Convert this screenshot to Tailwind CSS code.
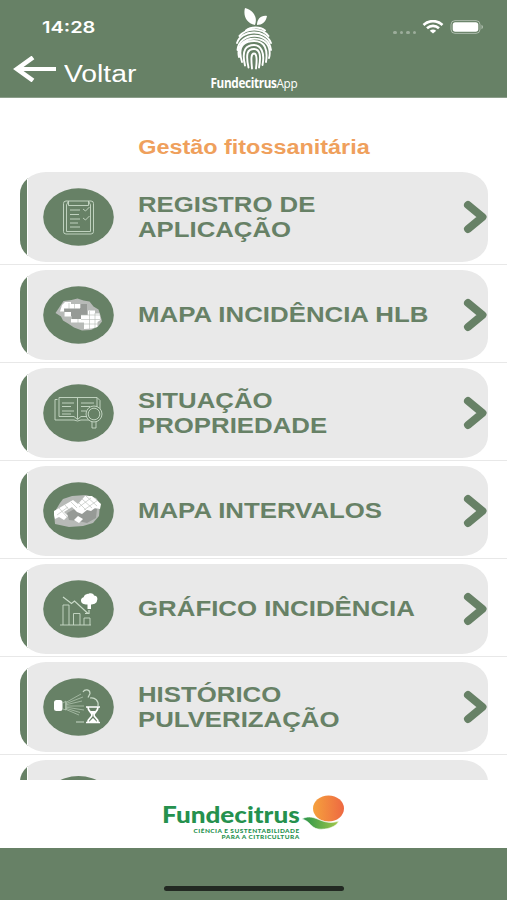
<!doctype html>
<html lang="pt-BR">

<head>
  <meta charset="utf-8">
  <meta name="viewport" content="width=device-width, initial-scale=1">
  <script src="https://cdn.jsdelivr.net/npm/@tailwindcss/browser@4"></script>
  <title>Gestão fitossanitária</title>
</head>

<body class="h-[900px] flex flex-col overflow-hidden bg-white font-['Liberation_Sans',sans-serif] text-[#678166]">
  <header class="h-[98px] shrink-0 grid grid-cols-[190px_1fr_190px] bg-[#678166] text-white border-b border-[#8b9e8a]">
    <div>
      <div class="pl-[42px] pt-[15px] h-[52px]">
        <span class="inline-block origin-left scale-x-[1.25] font-['Inter',sans-serif] font-semibold text-[16px] leading-6">14:28</span>
      </div>
      <div class="flex items-center pl-[13px]">
        <svg class="w-[43px] h-[26px] mt-[-5px]" viewBox="0 0 43 26" fill="none" stroke="#fff">
          <path d="M20 1.500 4 13l16 11.500" stroke-width="4.600" />
          <path d="M3 13h40" stroke-width="3.800" />
        </svg>
        <span class="ml-2 mt-1.5 inline-block origin-left scale-x-[1.23] text-[23px] leading-8">Voltar</span>
      </div>
    </div>

    <div class="flex flex-col items-center">
      <svg class="mt-[7px] w-[38px] h-[65px]" viewBox="0 0 38 65" fill="none" stroke="#fff" stroke-width="1.900" stroke-linecap="round">
        <path d="M20 18C11 16 8 8 10 1c8 2 13 9 10 17zM22 18c0-6 4-10 10-9-1 6-5 9-10 9z" fill="#fff" stroke="none" />
        <path d="M11 23.500c5-4 14-4 19 0M4.500 29c7-8 22-9 29 0" />
        <path d="M2 36c4-13 28-15 34 0M2.500 43c2-18 31-20 33.500 0" />
        <path d="M4 50C-1 29 30 26 34 41c1 4 1 7 0 10M7 55C1 36 13 34 19 34c11 0 14 9 12 21" />
        <path d="M10 58.500C6 42 12 38 19 38s11 8 8.500 20M13.500 60.500c-3-14-1-18.500 5.500-18.500s7 8 5 18.500" />
        <path d="M17 61.500c-1-10-1-15 2-15s3 7 2 15" />
      </svg>
      <span class="mt-[1px] inline-block origin-center scale-x-[.87] whitespace-nowrap font-['Open_Sans',sans-serif] text-[13.500px] leading-5 tracking-[-0.4px]"><b class="font-bold">Fundecitrus</b><span class="font-medium">App</span></span>
    </div>

    <div class="flex pt-5 pl-[76px]">
      <div class="flex gap-[3px] mt-[11px] mr-[7px]">
        <i class="w-[3.500px] h-[2.500px] rounded-full bg-white/35"></i>
        <i class="w-[3.500px] h-[2.500px] rounded-full bg-white/35"></i>
        <i class="w-[3.500px] h-[2.500px] rounded-full bg-white/35"></i>
        <i class="w-[3.500px] h-[2.500px] rounded-full bg-white/35"></i>
      </div>
      <svg class="-ml-px w-[22px] h-[14px]" viewBox="0 0 22 14" fill="none" stroke="#fff" stroke-width="2.600">
        <path d="M1.500 5C7-.2 15-.2 20.500 5M5 8.300c3.500-3.200 8.500-3.200 12 0" />
        <path d="M7.800 10.700c2-1.600 4.400-1.600 6.400 0L11 13.500z" fill="#fff" stroke="none" />
      </svg>
      <svg class="ml-[6px] w-[34px] h-[14px]" viewBox="0 0 34 14">
        <rect x="1" y=".6" width="29" height="12.800" rx="4" fill="none" stroke="#fff" stroke-opacity=".45" />
        <rect x="2.700" y="2.300" width="25.600" height="9.400" rx="2.600" fill="#fff" />
        <path d="M31.500 4.800c2 .8 2 3.600 0 4.400z" fill="#fff" fill-opacity=".5" />
      </svg>
    </div>
  </header>

  <main class="h-[682px] shrink-0 overflow-hidden">
    <h1 class="h-[69px] pt-[37px] text-center text-[20px] leading-6 font-bold text-[#efa05c]">
      <span class="inline-block scale-x-[1.17]">Gestão fitossanitária</span>
    </h1>

    <ul>
      <li class="h-[98px] pt-[5px] px-5 border-b border-[#e8e8e8]">
        <a class="h-[90px] w-[468px] flex items-center rounded-[26px/22px] overflow-hidden bg-[#e9e9e9]">
          <i class="w-2 h-full bg-[#678166] border-r border-white"></i>
          <svg class="ml-[15px] w-[71px] h-[58px] shrink-0" viewBox="0 0 71 58" fill="none" stroke="#c9dac8" stroke-width=".9">
            <ellipse cx="35.500" cy="29" rx="35.300" ry="28.800" fill="#678166" stroke="none" />
            <rect x="20.500" y="13" width="30" height="33" rx="2.500" />
            <path d="M23.500 17v26.500h24V17M25.500 13v4.500h20V13M23.500 17l2-4M47.500 17l-2-4" />
            <path d="M27 22h10M27 26.500h9M27 31h10M27 35h8M27 39h10M40 21l2.500 2 4-4M40 30l2.500 2 4-4" />
          </svg>
          <span class="ml-6 mt-px w-[320px] shrink-0 origin-left scale-x-[1.17] text-[22px] leading-[24.500px] font-bold">REGISTRO DE<br>APLICAÇÃO</span>
          <svg class="ml-[5px] w-6 h-[34px] shrink-0" viewBox="0 0 24 34" fill="none" stroke="#678166" stroke-width="8" stroke-linecap="round" stroke-linejoin="round"><path d="M5 5 19.500 17 5 29" /></svg>
        </a>
      </li>

      <li class="h-[98px] pt-[5px] px-5 border-b border-[#e8e8e8]">
        <a class="h-[90px] w-[468px] flex items-center rounded-[26px/22px] overflow-hidden bg-[#e9e9e9]">
          <i class="w-2 h-full bg-[#678166] border-r border-white"></i>
          <svg class="ml-[15px] w-[71px] h-[58px] shrink-0" viewBox="0 0 71 58">
            <ellipse cx="35.500" cy="29" rx="35.300" ry="28.800" fill="#678166" />
            <path d="m12.500 27 4-6 4-6 8-1 6-1.500 6 2 6 1 4 5 5 3 2 6 1.500 6-4 5-7 3.500-9 .5-8-3-6-4-5-3-2-4z" fill="#b7bab7" />
            <path d="M21 22h17v-4h6v16H29v-4h-7z" fill="#969a96" />
            <path d="M19 19l3-3h6v2h9v4.500H21v3h-4zM21.500 26h6.500v4.500h-6.500zM28 33h13.500v3.500H28zM45 24.500h7v3h4.500l1 6.500-3 2v5l-6 1.500-7.500.5V33h-3v-4h7z" fill="#fff" />
            <path d="M26 17v6M31.500 18v5M35 33v4M46.500 25v18M52 27v15M38 29h19M38 33.500h19M41 38h14" fill="none" stroke="#b4b8b4" stroke-width=".6" />
          </svg>
          <span class="ml-6 mt-px w-[320px] shrink-0 origin-left scale-x-[1.174] text-[22px] leading-[24.500px] font-bold">MAPA INCIDÊNCIA HLB</span>
          <svg class="ml-[5px] w-6 h-[34px] shrink-0" viewBox="0 0 24 34" fill="none" stroke="#678166" stroke-width="8" stroke-linecap="round" stroke-linejoin="round"><path d="M5 5 19.500 17 5 29" /></svg>
        </a>
      </li>

      <li class="h-[98px] pt-[5px] px-5 border-b border-[#e8e8e8]">
        <a class="h-[90px] w-[468px] flex items-center rounded-[26px/22px] overflow-hidden bg-[#e9e9e9]">
          <i class="w-2 h-full bg-[#678166] border-r border-white"></i>
          <svg class="ml-[15px] w-[71px] h-[58px] shrink-0" viewBox="0 0 71 58" fill="none" stroke="#c9dac8" stroke-width=".9">
            <ellipse cx="35.500" cy="29" rx="35.300" ry="28.800" fill="#678166" stroke="none" />
            <path d="M16 13.500h38l3 3V29M16 13.500v19h15l3.500 3 3.500-3h7M14.500 15.500H12V36h19l3.500 1 3.500-1h9M34.500 14v21M54 13.500V25" />
            <path d="M19 19h12M19 22.500h9M19 27h12M19 30h9M38 19h13M38 22.500h9M38 27h5" />
            <circle cx="51" cy="30" r="8" fill="#678166" />
            <circle cx="51" cy="30" r="5.800" />
            <path d="M49 38v6h4v-6" />
          </svg>
          <span class="ml-6 mt-px w-[320px] shrink-0 origin-left scale-x-[1.172] text-[22px] leading-[24.500px] font-bold">SITUAÇÃO<br>PROPRIEDADE</span>
          <svg class="ml-[5px] w-6 h-[34px] shrink-0" viewBox="0 0 24 34" fill="none" stroke="#678166" stroke-width="8" stroke-linecap="round" stroke-linejoin="round"><path d="M5 5 19.500 17 5 29" /></svg>
        </a>
      </li>

      <li class="h-[98px] pt-[5px] px-5 border-b border-[#e8e8e8]">
        <a class="h-[90px] w-[468px] flex items-center rounded-[26px/22px] overflow-hidden bg-[#e9e9e9]">
          <i class="w-2 h-full bg-[#678166] border-r border-white"></i>
          <svg class="ml-[15px] w-[71px] h-[58px] shrink-0" viewBox="0 0 71 58">
            <ellipse cx="35.500" cy="29" rx="35.300" ry="28.800" fill="#678166" />
            <path d="m11 31 6-10 3-4 9-3 14-1 10 3 4 6-1 12-6 7-10 3-14 1-14-3z" fill="#b7bab7" />
            <path d="m24 31 13-7 17 3-1 9-9 5-9-2-9-1z" fill="#969a96" />
            <path d="m11 29 19-11 5 4 7-8 7 0 9 8-1 5-5-1-4 3-4-1-5 4-5-2-5-5-8 5 4 4-4 4-5-3-4 2-1-4zM31 38l4-4 5 3-4 4z" fill="#fff" />
            <path d="m16 26 8 9M22 23l5 6M28 20l6 6M35 20l8 8M39 17l10 9M43 14l11 10M36 25l12-9M41 28l14-10M14 33l11-8" fill="none" stroke="#b4b8b4" stroke-width=".6" />
          </svg>
          <span class="ml-6 mt-px w-[320px] shrink-0 origin-left scale-x-[1.172] text-[22px] leading-[24.500px] font-bold">MAPA INTERVALOS</span>
          <svg class="ml-[5px] w-6 h-[34px] shrink-0" viewBox="0 0 24 34" fill="none" stroke="#678166" stroke-width="8" stroke-linecap="round" stroke-linejoin="round"><path d="M5 5 19.500 17 5 29" /></svg>
        </a>
      </li>

      <li class="h-[98px] pt-[5px] px-5 border-b border-[#e8e8e8]">
        <a class="h-[90px] w-[468px] flex items-center rounded-[26px/22px] overflow-hidden bg-[#e9e9e9]">
          <i class="w-2 h-full bg-[#678166] border-r border-white"></i>
          <svg class="ml-[15px] w-[71px] h-[58px] shrink-0" viewBox="0 0 71 58" fill="none" stroke="#c9dac8" stroke-width=".9">
            <ellipse cx="35.500" cy="29" rx="35.300" ry="28.800" fill="#678166" stroke="none" />
            <path d="M17 45h31M20 45V25h6v20M30.500 45V33.500h6.500V45M41 45v-7h6v7" />
            <path d="m20 17 8.500 6.500 3-2.500L45 33.500m-3 0h4V30" stroke-width="1.200" />
            <path d="M44 24.500c-3 0-6-1-6-4s3-3 3-4c1-3 4-2 5-3 3-1 5 1 5 2 3 0 4 3 3 5 0 3-4 4-6 4v4.500h-3.500v-4.500z" fill="#fff" stroke="none" />
          </svg>
          <span class="ml-6 mt-px w-[320px] shrink-0 origin-left scale-x-[1.174] text-[22px] leading-[24.500px] font-bold">GRÁFICO INCIDÊNCIA</span>
          <svg class="ml-[5px] w-6 h-[34px] shrink-0" viewBox="0 0 24 34" fill="none" stroke="#678166" stroke-width="8" stroke-linecap="round" stroke-linejoin="round"><path d="M5 5 19.500 17 5 29" /></svg>
        </a>
      </li>

      <li class="h-[98px] pt-[5px] px-5 border-b border-[#e8e8e8]">
        <a class="h-[90px] w-[468px] flex items-center rounded-[26px/22px] overflow-hidden bg-[#e9e9e9]">
          <i class="w-2 h-full bg-[#678166] border-r border-white"></i>
          <svg class="ml-[15px] w-[71px] h-[58px] shrink-0" viewBox="0 0 71 58" fill="none" stroke="#c9dac8" stroke-width=".6">
            <ellipse cx="35.500" cy="29" rx="35.300" ry="28.800" fill="#678166" stroke="none" />
            <rect x="11" y="22" width="8.500" height="11" rx="2.500" fill="#fff" stroke="none" />
            <path d="m20 25 3-2v9l-3-1M22 25l16-9M22 26l18-7M22 27l17-4M22 28h19M22 29l19 3M22 30l15 4.500M22 31l14 6" />
            <path d="M40 14c2-3.500 7-2.500 7 1.500l-2 4M47 20c5-1 9 3 8 8M33 44h8" stroke-width="1.200" />
            <path d="M43 29h14M43 44.500h14M45 29c0 5 4 5 4 8s-4 3-4 7M55 29c0 5-4 5-4 8s4 3 4 7" stroke="#fff" stroke-width="1.700" />
            <path d="M47 33h6l-3 4zM46 44l4-4 4 4z" fill="#fff" stroke="none" />
          </svg>
          <span class="ml-6 mt-px w-[320px] shrink-0 origin-left scale-x-[1.172] text-[22px] leading-[24.500px] font-bold">HISTÓRICO<br>PULVERIZAÇÃO</span>
          <svg class="ml-[5px] w-6 h-[34px] shrink-0" viewBox="0 0 24 34" fill="none" stroke="#678166" stroke-width="8" stroke-linecap="round" stroke-linejoin="round"><path d="M5 5 19.500 17 5 29" /></svg>
        </a>
      </li>

      <li class="h-[98px] pt-[5px] px-5">
        <a class="h-[90px] w-[468px] flex items-center rounded-[26px/22px] overflow-hidden bg-[#e9e9e9]">
          <i class="w-2 h-full bg-[#678166] border-r border-white"></i>
          <i class="ml-[15px] w-[71px] h-[58px] rounded-[50%] bg-[#678166]"></i>
        </a>
      </li>
    </ul>
  </main>

  <footer class="h-[120px] shrink-0 flex flex-col">
    <div class="h-[68px] flex pl-[162px] pt-[15px] text-[#25914e]">
      <div class="w-[138px] flex flex-col items-end">
        <span class="mt-[3px] inline-block origin-right scale-x-[1.16] font-['Lato',sans-serif] font-black text-[22.500px] leading-[34px] whitespace-nowrap">Fundecitrus</span>
        <span class="inline-block origin-right scale-x-[1.17] mt-[-4px] text-right font-['Lato',sans-serif] font-black text-[5.500px] leading-[6px] tracking-[.4px] whitespace-nowrap">CIÊNCIA E SUSTENTABILIDADE<br>PARA A CITRICULTURA</span>
      </div>
      <svg class="ml-[2px] w-[43px] h-[36px]" viewBox="0 0 43 36">
        <defs>
          <linearGradient id="fruit" x1="0" x2="1"><stop stop-color="#f5a13d" /><stop offset="1" stop-color="#ee6842" /></linearGradient>
          <linearGradient id="leaf" x1="0" x2="1"><stop stop-color="#27944a" /><stop offset="1" stop-color="#a3c84a" /></linearGradient>
        </defs>
        <ellipse cx="26.500" cy="13.500" rx="15.500" ry="13" fill="url(#fruit)" />
        <path d="M0 24c7-4 13-1 18 1 7 3 13 3 19 1-3 6-12 9-21 8C9 33 8 26 0 24z" fill="url(#leaf)" stroke="#fff" stroke-width=".6" />
      </svg>
    </div>
    <div class="grow flex justify-center items-end pb-[9px] bg-[#678166]">
      <i class="w-[180px] h-[5px] rounded-full bg-[#222922]"></i>
    </div>
  </footer>
</body>

</html>
